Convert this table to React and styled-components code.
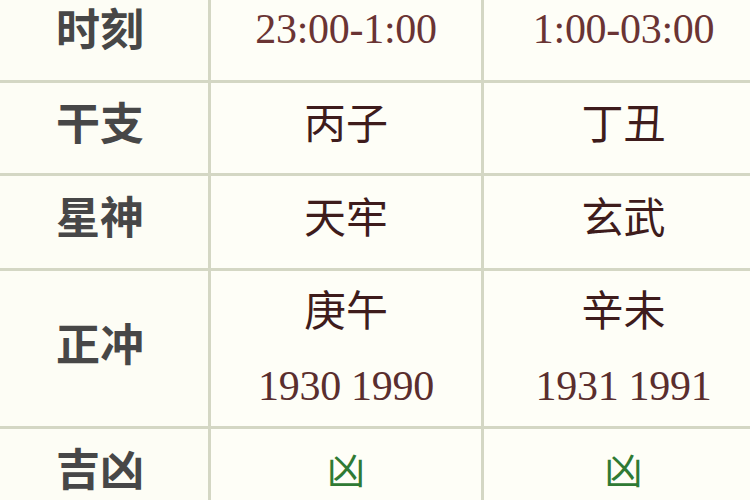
import React from "react";
import styled, { createGlobalStyle } from "styled-components";

const GlobalStyle = createGlobalStyle`
  html, body {
    margin: 0;
    padding: 0;
    background: #fefef7;
  }
`;

const Frame = styled.div`
  width: 750px;
  height: 500px;
  overflow: hidden;
  background: #fefef7;
`;

const Table = styled.table`
  table-layout: fixed;
  border-collapse: collapse;
  width: 774px;
  margin: -16px 0 0 -11px;
  font-family: "Noto Sans CJK SC", "Noto Sans", sans-serif;
`;

const Row = styled.tr`
  height: ${(props) => props.height}px;
`;

const Cell = styled.td`
  border: 3px solid #d4d7c4;
  text-align: center;
  vertical-align: middle;
  padding: 0 0 ${(props) => (props.tall ? 3 : 14)}px 0;
  font-size: 42px;
  line-height: 56px;
  color: #3e1c1c;
`;

const HeadCell = styled(Cell)`
  font-size: 44px;
  font-weight: 700;
  color: #474747;
  background: #fdfdf5;
`;

const Num = styled.span`
  font-family: "Liberation Serif", "Times New Roman", serif;
  font-size: 42px;
  color: ${(props) => props.color || "#5a2e2e"};
  letter-spacing: -0.3px;
`;

const Line = styled.div`
  line-height: 74px;
`;

const Bad = styled.span`
  font-size: 38px;
  color: #2f7a34;
`;

const hours = [
  { time: "23:00-1:00", gz: "丙子", star: "天牢", chong: "庚午", years: "1930 1990" },
  { time: "1:00-03:00", gz: "丁丑", star: "玄武", chong: "辛未", years: "1931 1991" },
];

export default function App() {
  return (
    <Frame>
      <GlobalStyle />
      <Table>
        <colgroup>
          <col style={{ width: 219 }} />
          <col style={{ width: 273 }} />
          <col style={{ width: 282 }} />
        </colgroup>
        <tbody>
          <Row height={96}>
            <HeadCell>时刻</HeadCell>
            {hours.map((h) => (
              <Cell key={h.time}>
                <Num color="#6a3434">{h.time}</Num>
              </Cell>
            ))}
          </Row>
          <Row height={93}>
            <HeadCell>干支</HeadCell>
            {hours.map((h) => (
              <Cell key={h.gz}>{h.gz}</Cell>
            ))}
          </Row>
          <Row height={95}>
            <HeadCell>星神</HeadCell>
            {hours.map((h) => (
              <Cell key={h.star}>{h.star}</Cell>
            ))}
          </Row>
          <Row height={158}>
            <HeadCell>正冲</HeadCell>
            {hours.map((h) => (
              <Cell key={h.chong} tall>
                <Line>{h.chong}</Line>
                <Line>
                  <Num>{h.years}</Num>
                </Line>
              </Cell>
            ))}
          </Row>
          <Row height={92}>
            <HeadCell>吉凶</HeadCell>
            {hours.map((h) => (
              <Cell key={h.time + "jx"}>
                <Bad>凶</Bad>
              </Cell>
            ))}
          </Row>
        </tbody>
      </Table>
    </Frame>
  );
}
